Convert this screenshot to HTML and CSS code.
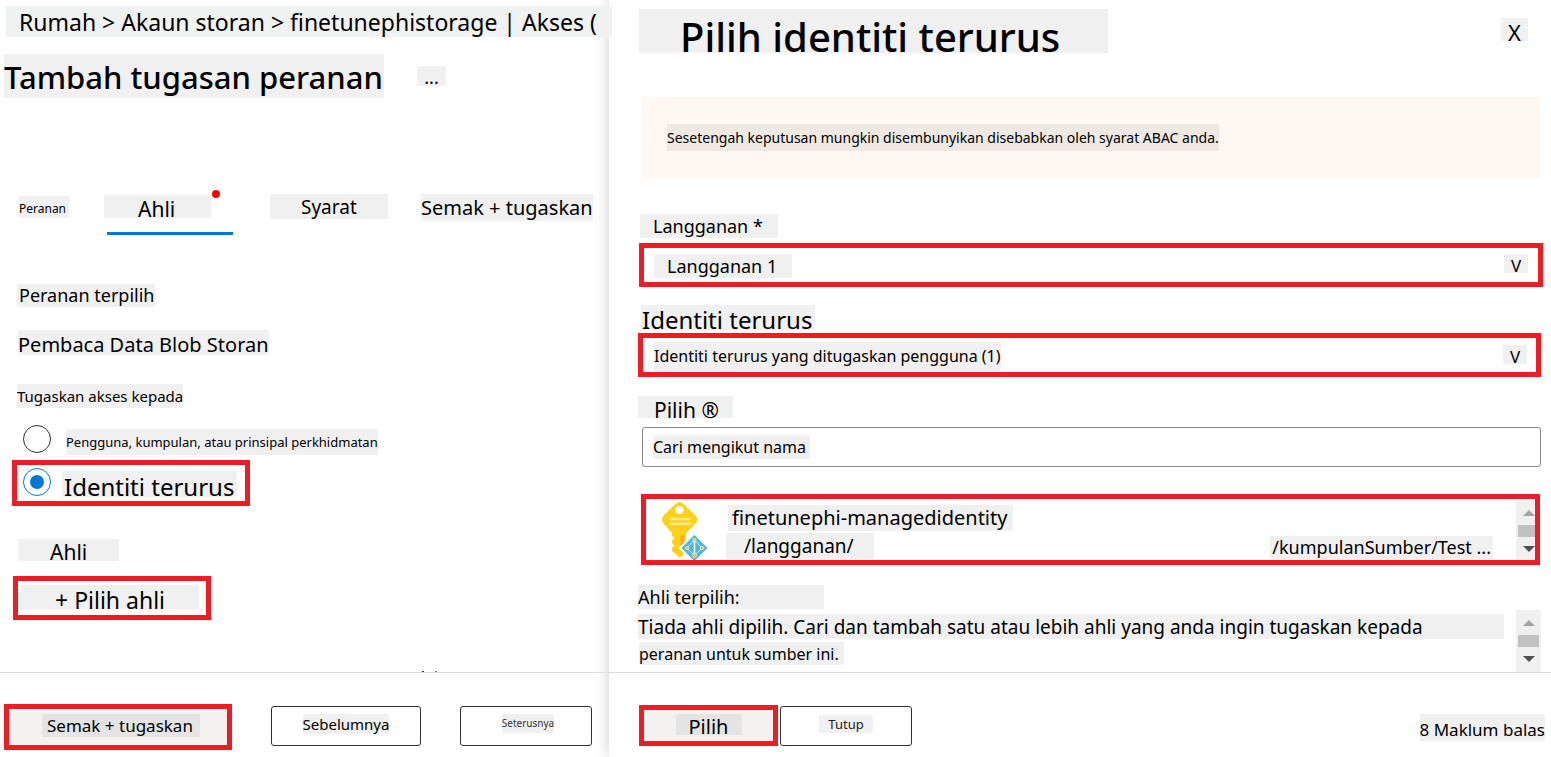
FILE: index.html
```html
<!DOCTYPE html>
<html lang="ms">
<head>
<meta charset="utf-8">
<meta name="viewport" content="width=device-width, initial-scale=1">
<title>Tambah tugasan peranan</title>
<link rel="stylesheet" href="styles.css">
</head>
<body>
<div class="app">
  <main class="pane page">
    <nav class="chip crumbs" aria-label="Laluan">Rumah &gt; Akaun storan &gt; finetunephistorage | Akses (</nav>
    <header class="page-head">
      <h1 class="chip page-title">Tambah tugasan peranan</h1>
      <button class="chip more" type="button">...</button>
    </header>
    <div class="tabs" role="tablist">
      <button class="chip tab tab-role" role="tab" type="button">Peranan</button>
      <div class="tab-active">
        <button class="chip tab tab-members" role="tab" aria-selected="true" type="button">Ahli</button>
        <span class="dot"></span>
      </div>
      <button class="chip tab tab-terms" role="tab" type="button">Syarat</button>
      <button class="chip tab tab-review" role="tab" type="button">Semak + tugaskan</button>
    </div>
    <div class="details">
      <h2 class="chip role-label">Peranan terpilih</h2>
      <p class="chip role-value">Pembaca Data Blob Storan</p>
      <h2 class="chip access-label" id="access">Tugaskan akses kepada</h2>
      <div class="choices" role="radiogroup" aria-labelledby="access">
        <label class="choice">
          <input class="radio" type="radio" name="access">
          <span class="chip choice-user">Pengguna, kumpulan, atau prinsipal perkhidmatan</span>
        </label>
        <label class="choice marked marked-choice">
          <input class="radio" type="radio" name="access" checked>
          <span class="chip choice-identity">Identiti terurus</span>
        </label>
      </div>
      <h2 class="chip members-label">Ahli</h2>
      <button class="marked add" type="button"><span class="chip add-text">+ Pilih ahli</span></button>
    </div>
    <footer class="foot page-foot">
      <button class="marked primary review" type="button"><span class="chip review-text">Semak + tugaskan</span></button>
      <button class="btn previous" type="button"><span class="chip previous-text">Sebelumnya</span></button>
      <button class="btn next" type="button"><span class="chip next-text">Seterusnya</span></button>
    </footer>
  </main>

  <aside class="pane panel">
    <header class="panel-head">
      <h1 class="chip panel-title">Pilih identiti terurus</h1>
      <button class="chip close" type="button">X</button>
    </header>
    <div class="notice"><p class="chip notice-text">Sesetengah keputusan mungkin disembunyikan disebabkan oleh syarat ABAC anda.</p></div>

    <label class="chip sub-label" for="subscription">Langganan *</label>
    <div class="marked field field-sub">
      <select class="chip sub-select" id="subscription"><option>Langganan 1</option></select>
      <span class="chip arrow" aria-hidden="true">V</span>
    </div>

    <label class="chip identity-label" for="identity">Identiti terurus</label>
    <div class="marked field field-identity">
      <select class="chip identity-select" id="identity"><option>Identiti terurus yang ditugaskan pengguna (1)</option></select>
      <span class="chip arrow" aria-hidden="true">V</span>
    </div>

    <label class="chip search-label" for="search">Pilih ®</label>
    <div class="search"><input class="chip search-input" id="search" type="text" placeholder="Cari mengikut nama"></div>

    <div class="marked result">
      <svg class="key" viewBox="0 0 46 58" aria-hidden="true">
        <path fill="#fcd116" d="M14 1.5Q17.500-1.500 21 1.500L33.500 13.500Q37 17.500 33.500 21.500L24 31V50L18 56L10 49V46L12.500 43.500L10 41V38.500L12.500 36L10 33.500V31L1.500 21.500Q-1.500 17.500 1.500 13.500Z"/>
        <path fill="#ff9f12" opacity=".7" d="M18.500 33.500H22V43L18.500 47Z"/>
        <circle cx="17.500" cy="8" r="4" fill="#fff"/>
        <path stroke="#fbe98b" stroke-width="2.500" stroke-linecap="round" d="M8.500 17H27.500M8.500 21.800H27.500"/>
        <path fill="#59b4d9" stroke="#fff" stroke-width="2" stroke-linejoin="round" d="M32.500 31.500L47 46L32.500 60.500L18 46Z"/>
        <path fill="none" stroke="#d4edf7" stroke-width=".9" d="M32.500 38L25 46L32.500 53.500L40 46Z"/>
        <path stroke="#fff" stroke-width="1.500" d="M32.500 38V53.500"/>
        <g fill="#b8d432" stroke="#fff" stroke-width=".6"><circle cx="32.500" cy="38" r="1.600"/><circle cx="25" cy="46" r="1.600"/><circle cx="40" cy="46" r="1.600"/><circle cx="32.500" cy="53.500" r="2"/></g>
      </svg>
      <div class="result-text">
        <strong class="chip result-name">finetunephi-managedidentity</strong>
        <div class="result-path"><span class="chip path-sub">/langganan/</span><span class="chip path-group">/kumpulanSumber/Test ...</span></div>
      </div>
      <div class="scroll scroll-result" aria-hidden="true"><i class="up"></i><i class="thumb"></i><i class="down"></i></div>
    </div>

    <h2 class="chip selected-label">Ahli terpilih:</h2>
    <div class="selected">
      <div class="selected-text">
        <p class="chip line-one">Tiada ahli dipilih. Cari dan tambah satu atau lebih ahli yang anda ingin tugaskan kepada</p>
        <p class="chip line-two">peranan untuk sumber ini.</p>
      </div>
      <div class="scroll" aria-hidden="true"><i class="up"></i><i class="thumb"></i><i class="down"></i></div>
    </div>

    <footer class="foot panel-foot">
      <button class="marked primary select" type="button"><span class="chip select-text">Pilih</span></button>
      <button class="btn dismiss" type="button"><span class="chip dismiss-text">Tutup</span></button>
      <a class="chip feedback" href="#">8 Maklum balas</a>
    </footer>
  </aside>
</div>
</body>
</html>
```
FILE: styles.css
```css
* { box-sizing: border-box; }

body {
  margin: 0;
  background: #fff;
  color: #000;
  font-family: "Noto Sans", "Open Sans", sans-serif;
}

h1, h2, p { margin: 0; font-weight: 400; }
strong { font-weight: 400; }

button, select, input {
  margin: 0;
  padding: 0;
  border: 0;
  border-radius: 0;
  background: none;
  color: inherit;
  font-family: inherit;
}

.app {
  display: grid;
  grid-template-columns: 609fr 942fr;
  min-height: 100vh;
}

.pane {
  display: flex;
  flex-direction: column;
  align-items: flex-start;
  min-width: 0;
}

.panel {
  padding-top: 9px;
  background: #fff;
  box-shadow: 0 0 14px rgba(0, 0, 0, .2);
}

.chip {
  display: block;
  background: #f0f0f0;
  white-space: nowrap;
}

.marked { border: 5px solid #ee1c24; }

/* Page header */
.crumbs {
  position: relative;
  z-index: 1;
  align-self: stretch;
  margin: 6px -3px 0 6px;
  padding: 1px 0 0 13px;
  background: #f0f1f1;
  font-size: 23px;
  line-height: 30px;
}

.page-head {
  display: flex;
  align-items: flex-start;
  gap: 33px;
  margin: 17px 0 0 4px;
}

.page-title { width: 380px; padding-top: 2px; font-size: 31px; font-weight: 500; line-height: 42px; }

.more {
  width: 29px;
  margin-top: 12px;
  padding-top: 2px;
  font-size: 18px;
  line-height: 18px;
}

/* Tabs */
.tabs {
  display: flex;
  align-items: flex-start;
  margin: 96px 0 0 19px;
}

.tab { text-align: left; }

.tab-role {
  width: 50px;
  margin-top: 2px;
  padding-top: 3px;
  font-size: 12px;
  line-height: 19px;
}

.tab-active {
  position: relative;
  width: 129px;
  height: 40px;
  margin: 1px 0 0 35px;
}

.tab-active::after {
  content: "";
  position: absolute;
  right: 0;
  bottom: 0;
  width: 126px;
  height: 3px;
  background: #0078d4;
}

.tab-members {
  width: 107px;
  padding: 5px 0 0 34px;
  font-size: 21px;
  line-height: 18px;
}

.dot {
  position: absolute;
  top: -5px;
  left: 108px;
  width: 8px;
  height: 8px;
  border-radius: 50%;
  background: #f00;
}

.tab-terms {
  width: 118px;
  margin-left: 37px;
  padding: 2px 0 0 31px;
  font-size: 19px;
  line-height: 23px;
}

.tab-review { margin-left: 33px; font-size: 20px; line-height: 27px; }

/* Role details */
.details {
  display: flex;
  flex-direction: column;
  align-items: flex-start;
  padding: 49px 0 24px 12px;
}

.role-label { margin-left: 5px; padding: 0 1px 0 2px; font-size: 18px; line-height: 23px; }
.role-value { margin: 23px 0 0 6px; padding-top: 5px; font-size: 20px; line-height: 20px; }
.access-label { margin: 29px 0 0 5px; font-size: 15px; line-height: 24px; }

.choices { margin-top: 17px; }

.choice { display: flex; align-items: flex-start; padding-left: 11px; }

.radio {
  appearance: none;
  flex: none;
  display: grid;
  place-items: center;
  width: 28px;
  height: 28px;
  border: 1px solid #323130;
  border-radius: 50%;
}

.radio:checked { border-color: #0078d4; }

.radio:checked::before {
  content: "";
  width: 14px;
  height: 14px;
  border-radius: 50%;
  background: #0078d4;
}

.choice-user { margin: 4px 0 0 15px; font-size: 13px; line-height: 26px; }

.marked-choice { width: 238px; height: 46px; margin-top: 5px; padding: 3px 0 0 6px; }

.choice-identity {
  width: 175px;
  margin: 3px 0 0 11px;
  padding: 6px 0 0 2px;
  font-size: 24px;
  line-height: 20px;
}

.members-label {
  width: 101px;
  margin: 33px 0 0 6px;
  padding: 4px 0 0 32px;
  font-size: 21px;
  line-height: 18px;
}

.add { margin: 15px 0 0 1px; padding: 4px 7px 6px 2px; }

.add-text {
  width: 179px;
  padding: 6px 0 0 35px;
  font-size: 23px;
  line-height: 18px;
  text-align: left;
}

/* Footers */
.foot {
  display: flex;
  align-items: flex-start;
  align-self: stretch;
  height: 85px;
  margin-top: auto;
  border-top: 1px solid #ddd;
}

.btn, .primary { display: flex; justify-content: center; align-items: flex-start; }
.btn { height: 40px; border: 1px solid #323130; border-radius: 3px; background: #fff; }
.primary { background: #f3f2f1; }
.primary .chip { background: #e4e4e4; }

.page-foot { position: relative; padding: 31px 17px 0 4px; }

/* Tops of the two marks that show above the footer line */
.page-foot::before {
  content: "";
  position: absolute;
  top: -2px;
  left: 422px;
  width: 2px;
  height: 1px;
  background: #333;
  box-shadow: 13px 0 #777;
}

.review { width: 228px; height: 46px; padding: 5px 0 0 6px; }
.review-text { width: 158px; padding-left: 5px; font-size: 17px; line-height: 23px; text-align: left; }
.previous { width: 150px; margin: 2px 0 0 39px; padding-top: 7px; }
.previous-text { font-size: 15px; line-height: 20px; }
.next { width: 132px; margin: 2px 0 0 39px; padding: 7px 0 0 4px; }
.next-text { color: #333; font-size: 10px; line-height: 19px; }

.panel-foot { padding: 32px 6px 0 30px; }
.select { width: 139px; height: 41px; padding-top: 4px; }
.select-text { width: 66px; padding-top: 5px; font-size: 20px; line-height: 16px; }
.dismiss { width: 132px; margin: 1px 0 0 2px; padding-top: 8px; }
.dismiss-text { width: 54px; color: #222; font-size: 13px; line-height: 18px; }

.feedback {
  margin: 9px 0 0 auto;
  padding-top: 4px;
  color: inherit;
  font-size: 17px;
  line-height: 23px;
  text-decoration: none;
}

/* Panel header */
.panel-head {
  display: flex;
  justify-content: space-between;
  align-items: flex-start;
  align-self: stretch;
  padding: 0 23px 0 30px;
}

.panel-title {
  width: 469px;
  padding: 12px 0 0 41px;
  font-size: 40px;
  font-weight: 500;
  line-height: 32px;
}

.close {
  width: 27px;
  margin-top: 9px;
  padding-top: 5px;
  font-size: 22px;
  line-height: 18px;
}

.notice {
  align-self: stretch;
  margin: 44px 11px 0 33px;
  padding: 27px 25px;
  border-radius: 2px;
  background: #fff7f1;
}

.notice-text { width: fit-content; background: #efe9e3; font-size: 14px; line-height: 27px; }

/* Panel fields */
.field {
  display: flex;
  justify-content: space-between;
  align-items: flex-start;
  align-self: stretch;
  height: 44px;
}

.field select { appearance: none; }

.arrow {
  width: 24px;
  padding-top: 4px;
  font-size: 17px;
  line-height: 15px;
  text-align: center;
}

.sub-label { width: 138px; margin: 36px 0 0 31px; padding-left: 13px; font-size: 18px; line-height: 24px; }
.field-sub { margin: 5px 8px 0 30px; padding: 6px 10px 0 10px; }
.sub-select { width: 138px; padding-left: 13px; font-size: 18px; line-height: 24px; }

.identity-label { width: 174px; margin: 18px 0 0 32px; padding: 5px 0 0 1px; font-size: 24px; line-height: 20px; }
.field-identity { margin: 3px 10px 0 29px; padding: 4px 9px 0 11px; }
.identity-select { font-size: 16px; line-height: 29px; }
.field-identity .arrow { margin-top: 3px; }

.search-label { width: 95px; margin: 19px 0 0 29px; padding: 6px 0 0 16px; font-size: 21px; line-height: 16px; }

.search {
  align-self: stretch;
  height: 40px;
  margin: 9px 10px 0 33px;
  padding: 7px 10px;
  border: 1px solid #8a8886;
  border-radius: 3px;
}

.search-input { width: 157px; height: 24px; font-size: 16px; }
.search-input::placeholder { color: #000; opacity: 1; }

/* Identity list */
.result {
  display: flex;
  align-self: stretch;
  height: 71px;
  margin: 27px 11px 0 32px;
  padding-left: 16px;
  overflow: hidden;
}

.key { flex: none; width: 46px; height: 58px; margin-top: 3px; }

.result-text { flex: 1; padding: 6px 23px 0 18px; }
.result-name { width: 285px; margin-left: 2px; padding-left: 4px; font-size: 20px; line-height: 26px; }
.result-path { display: flex; justify-content: space-between; align-items: flex-end; margin-top: 2px; }
.path-sub { width: 148px; padding-left: 18px; font-size: 19px; line-height: 26px; }
.path-group { padding: 0 2px; font-size: 18px; line-height: 23px; }

.scroll {
  flex: none;
  display: flex;
  flex-direction: column;
  align-items: center;
  gap: 9px;
  width: 25px;
  height: 62px;
  padding-top: 10px;
  background: #f0f0f0;
}

.scroll-result { margin: 1px -6px 0 0; }
.up, .down { width: 0; height: 0; border: 6px solid transparent; }
.up { border-top: 0; border-bottom-color: #a3a3a3; }
.down { border-bottom: 0; border-top-color: #505050; }
.thumb { width: 21px; height: 12px; background: #c1c1c1; }

/* Selected members */
.selected-label { width: 186px; margin: 20px 0 0 29px; font-size: 18px; line-height: 24px; }

.selected {
  display: flex;
  justify-content: space-between;
  align-self: stretch;
  gap: 12px;
  margin: 1px 10px 0 29px;
}

.selected-text { flex: 1; padding-top: 4px; }
.line-one { padding-top: 1px; font-size: 19px; line-height: 24px; }
.line-two { width: 205px; margin: 3px 0 0 1px; padding-top: 1px; font-size: 16px; line-height: 22px; }
```
